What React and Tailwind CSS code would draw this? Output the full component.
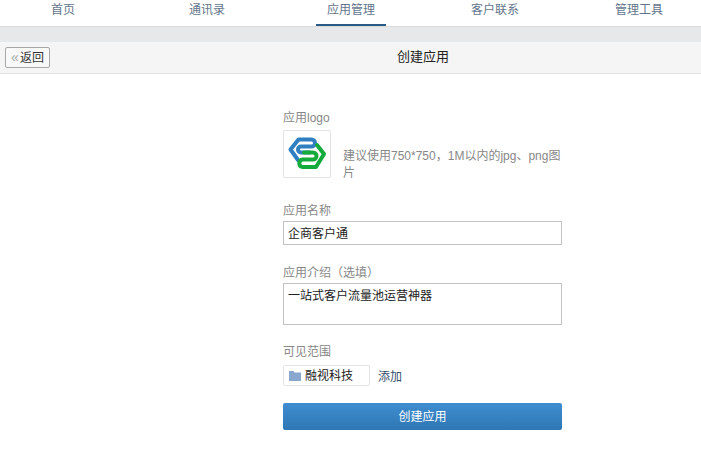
const FONT = '"Liberation Sans", "Noto Sans CJK SC", sans-serif';

function Logo() {
  return (
    <svg width="42" height="40" viewBox="0 0 42 40" fill="none" strokeWidth="4" strokeLinejoin="round" strokeLinecap="round">
      <path d="M12 26L4.5 15.5L12.5 5.5H25.5a3.5 3.5 0 0 1 0 7H15a3 3 0 0 0 0 6H24" stroke="#2f7fc1" />
      <path d="M31 11L38 20L30 33H16.5a3.8 3.8 0 0 1 0-7.5H27a3.5 3.5 0 0 0 0-7H18" stroke="#14ab3c" />
    </svg>
  );
}

function Field({ label, children, className = "" }) {
  return (
    <div className={className}>
      <div className="text-[12px] leading-[16px] text-[#888]">{label}</div>
      {children}
    </div>
  );
}

export default function App() {
  const tabs = ["首页", "通讯录", "应用管理", "客户联系", "管理工具"];
  return (
    <div className="min-h-[452px] bg-white overflow-hidden" style={{ fontFamily: FONT }}>
      <nav className="flex h-[27px] gap-[74px] pl-[28px] border-b border-[#d9dadb] overflow-hidden">
        {tabs.map((t, i) => (
          <div
            key={t}
            className={`w-[70px] shrink-0 h-[26px] text-center text-[12px] leading-[20px] text-[#63758b] ${i === 2 ? "border-b-[2px] border-[#2b5a85]" : ""}`}
          >
            {t}
          </div>
        ))}
      </nav>
      <div className="h-[15px] bg-[#e7e8e9]" />
      <div className="relative h-[32px] bg-[#f5f5f5] border-b border-[#e1e1e1] flex items-center">
        <button className="absolute left-[5px] top-[5px] h-[21px] w-[45px] flex items-center justify-center bg-[#f9f9f9] border border-[#a8a8a8] rounded-[2px] text-[12px] text-[#333]">
          <span className="text-[#a8a8a8] text-[14px] leading-[14px] mr-[1px] -mt-[2px]">«</span>返回
        </button>
        <span className="ml-[397px] text-[13px] text-[#222] -mt-[1px]">创建应用</span>
      </div>

      <main className="w-[279px] ml-[283px] pt-[36px]">
        <Field label="应用logo">
          <div className="flex items-end mt-[4px]">
            <div className="w-[48px] h-[48px] shrink-0 border border-[#e3e3e3] rounded-[2px] bg-white flex items-center justify-center">
              <Logo />
            </div>
            <p className="ml-[12px] w-[219px] text-[12px] leading-[17px] text-[#888] -mb-[4px]">
              建议使用750*750，1M以内的jpg、png图片
            </p>
          </div>
        </Field>

        <Field label="应用名称" className="mt-[25px]">
          <div className="mt-[2px] h-[24px] border border-[#c2c2c2] flex items-center px-[4px] pt-[1px] text-[12px] text-[#222]">
            企商客户通
          </div>
        </Field>

        <Field label="应用介绍（选填）" className="mt-[20px]">
          <div className="mt-[2px] h-[42px] border border-[#c2c2c2] px-[4px] pt-[4px] text-[12px] leading-[16px] text-[#222]">
            一站式客户流量池运营神器
          </div>
        </Field>

        <Field label="可见范围" className="mt-[19px]">
          <div className="flex items-center mt-[5px]">
            <div className="h-[21px] w-[87px] border border-[#e4e4e4] rounded-[2px] flex items-center pl-[5px] text-[12px] text-[#222]">
              <svg width="12" height="10" viewBox="0 0 12 10" className="mr-[4px]">
                <path d="M0 0H4.5L5.5 1.5H12V10H0Z" fill="#8aa8cf" />
              </svg>
              融视科技
            </div>
            <span className="ml-[8px] mt-[3px] text-[12px] text-[#35506e]">添加</span>
          </div>
        </Field>

        <button className="mt-[17px] w-full h-[27px] rounded-[2px] bg-gradient-to-b from-[#3f8dd0] to-[#2f77b4] text-[12px] text-white flex items-center justify-center">
          创建应用
        </button>
      </main>
    </div>
  );
}
